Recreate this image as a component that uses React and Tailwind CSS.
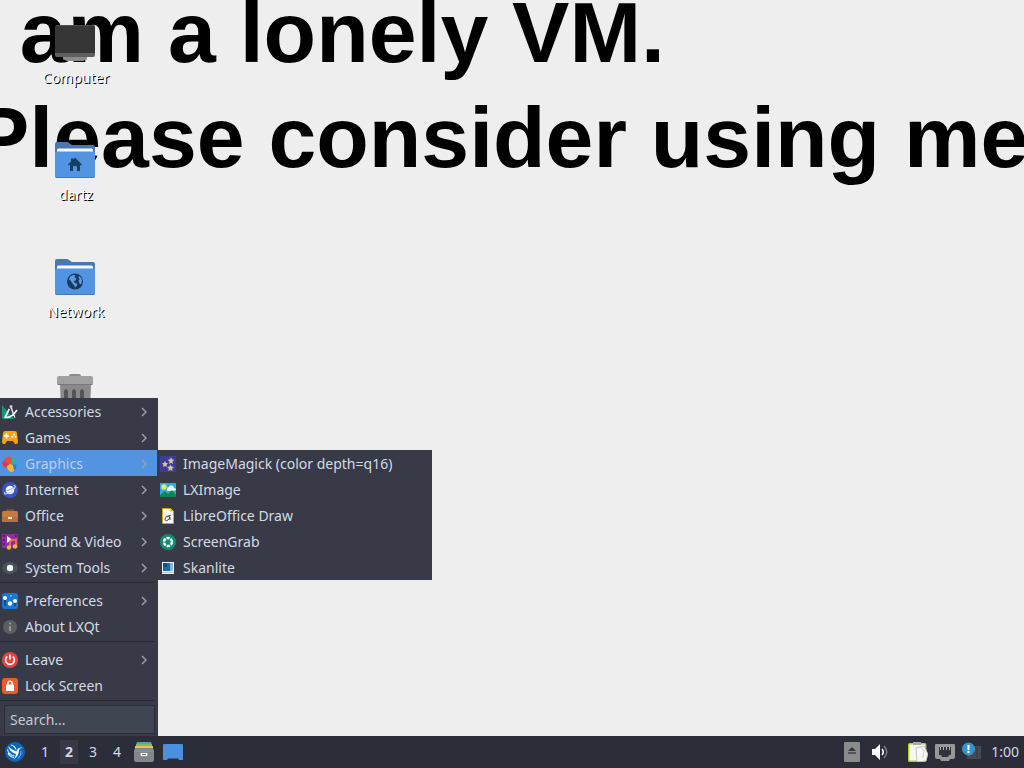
import React from 'react';
import clsx from 'clsx';

const ComputerIcon = () => (
  <svg viewBox="0 0 40 40" className="h-10 w-10">
    <path d="M8 34h24v1.500q0 1.500-2 1.500l-2 1H12l-2-1q-2 0-2-1.500z" fill="#8a8a8a" />
    <path d="M0 30h40v2q0 2-2 2H2q-2 0-2-2z" fill="#5f5f5f" />
    <path d="M2 2h36q2 0 2 2v26H0V4q0-2 2-2z" fill="#363636" />
    <path d="M1 2.500h38" stroke="#4c4c4c" />
  </svg>
);

const FolderIcon = ({ children }) => (
  <svg viewBox="0 0 40 40" className="h-10 w-10">
    <path d="M0 4q0-2 2-2h10q1 0 2 1l3 2h21q2 0 2 2v8H0z" fill="#4877b1" />
    <path d="M2 10q0-1.500 1.500-1.500h33Q38 8.500 38 10v4H2z" fill="#f5f7fb" />
    <path d="M0 13q0-1.500 1.500-1.500h37Q40 11.500 40 13v23q0 2-2 2H2q-2 0-2-2z" fill="#5294e2" />
    <path d="M0 36q0 2 2 2h36q2 0 2-2v-.6q0 1.600-2 1.600H2q-2 0-2-1.600z" fill="#4079bd" />
    {children}
  </svg>
);

const HomeFolderIcon = () => (
  <FolderIcon>
    <path d="M20 17.500l7 7-1 1-1-.8V31h-3v-4q0-1-2-1t-2 1v4h-3v-6.300l-1 .8-1-1 3-3v-3h2v1z" fill="#17405f" />
  </FolderIcon>
);

const NetworkFolderIcon = () => (
  <FolderIcon>
    <circle cx="20" cy="24.500" r="8" fill="#173a62" />
    <path d="M15 19.500l3-1.500 2.500.5-1 2 2 1-1 2-2 1 1.500 1.500 2 .5v2l-2 2-1-2.500-2-2-1.500-2.500-1.500-1zM24.500 19l2 2.500.5 3-1 3-1.500-1-1-2.500 1-1.500-1-2z" fill="#5d9ae2" />
  </FolderIcon>
);

const TrashIcon = () => (
  <svg viewBox="0 0 40 40" className="h-10 w-10">
    <path d="M14 2q0-2 2-2h8q2 0 2 2v2H14z" fill="#8b8b8b" />
    <path d="M5 10h31l-1 28q0 2-2 2H8q-2 0-2-2z" fill="#8a8a8a" />
    <path d="M9 17q2-4 4 0v21H9zM17 17q2-4 4 0v21h-4zM25 17q2-4 4 0v21h-4z" fill="#555" />
    <path d="M2 4q0-2 2-2h32q2 0 2 2v6q0 1-1 1H3q-1 0-1-1z" fill="#a0a0a0" />
    <path d="M3 10.500h34" stroke="#777" />
  </svg>
);

const Icon = ({ children }) => (
  <svg viewBox="0 0 16 16" className="h-4 w-4 shrink-0">{children}</svg>
);

const AccessoriesIcon = () => (
  <Icon>
    <path d="M0 1l12 14H1q-1 0-1-1z" fill="#16956f" />
    <path d="M3 13.500l4-8" stroke="#e9eef3" strokeWidth="1.700" strokeLinecap="round" />
    <path d="M9 3l3 9" stroke="#dfe5ea" strokeWidth="1.500" />
    <path d="M3 13q6 2 12-7" stroke="#f4f6f8" strokeWidth="1.600" fill="none" />
    <circle cx="9" cy="2.500" r="1.500" fill="#c5ccd4" />
    <path d="M12 11l1 3" stroke="#eceff1" />
  </Icon>
);

const GamesIcon = () => (
  <Icon>
    <path d="M3 1h10q1.500 0 2 2l1 9q0 2-2 2h-1l-2-3H5l-2 3H2q-2 0-2-2l1-9q.5-2 2-2z" fill="#f9a30f" />
    <path d="M4.500 3.500v5M2 6h5" stroke="#fff" strokeWidth="1.700" />
    <circle cx="12" cy="4.500" r="1" fill="#fff" />
    <circle cx="10.300" cy="6.800" r="1" fill="#fff" />
    <circle cx="13.500" cy="6.800" r="1" fill="#fff" />
  </Icon>
);

const GraphicsIcon = () => (
  <Icon>
    <path d="M9 8V2q3-2 4 1t-1 5z" fill="#3fb27f" />
    <path d="M9 8l4-4q4 1 3 4.500T11 11z" fill="#28a9d6" />
    <path d="M9 8l5 1q1 3-1 4.500T9 13z" fill="#3c6fd0" />
    <path d="M8 9L2 4Q-1 7 1 10t5 1z" fill="#d93c55" />
    <path d="M9 9L3 5q0-4 3.500-4.500T10 4z" fill="#ee4f34" />
    <path d="M8 8l-3 2q0 4 3 5.500t4-1.500l-1-5z" fill="#f7b92b" />
  </Icon>
);

const InternetIcon = () => (
  <Icon>
    <circle cx="8" cy="8" r="8" fill="#3d53c4" />
    <circle cx="8" cy="8" r="4.300" fill="#f4f7ff" />
    <path d="M3 10q-1.500 2.500 1 2 6-1.500 9-6.500 1-2.500-1.500-1.500" stroke="#c3d0fa" strokeWidth="1.200" fill="none" />
    <path d="M4.500 8.500q4-.5 7-3" stroke="#8fa3ea" strokeWidth="1" fill="none" />
  </Icon>
);

const OfficeIcon = () => (
  <Icon>
    <path d="M5 4V2h6v2" stroke="#8c5330" strokeWidth="1.500" fill="none" />
    <rect x="0" y="3" width="16" height="11" rx="1.500" fill="#c47a42" />
    <path d="M0 9h16v4q0 1-1.500 1h-13Q0 14 0 13z" fill="#b76f3c" />
    <rect x="6" y="9" width="4" height="2" fill="#fbe6bf" />
  </Icon>
);

const SoundVideoIcon = () => (
  <Icon>
    <rect width="16" height="14" rx="1" fill="#8b2fa3" />
    <path d="M1 1h2v2H1zM1 5h2v2H1zM1 9h2v2H1zM13 1h2v2h-2z" fill="#562071" />
    <path d="M5 2l5 3.500L5 9z" fill="#fff" />
    <path d="M8 6.500l6-1v7M8 6.500v7" stroke="#f36b50" strokeWidth="1.800" fill="none" />
    <circle cx="7" cy="13.500" r="2.200" fill="#f8ad37" />
    <circle cx="13" cy="12.500" r="2.200" fill="#f8ad37" />
  </Icon>
);

const SystemToolsIcon = () => (
  <Icon>
    <path d="M5 2h6l1 1.500 2.500.5 1 4-1 4-2.500.5-1 1.500H5l-1-1.500-2.500-.5-1-4 1-4L4 3.500z" fill="#46535d" />
    <circle cx="8" cy="8" r="3.200" fill="#f5f8fa" />
  </Icon>
);

const PreferencesIcon = () => (
  <Icon>
    <rect width="16" height="16" rx="3" fill="#1679d3" />
    <path d="M3 6v7M8 9v4M13 8v5" stroke="#0a4c90" strokeWidth="2" />
    <circle cx="3" cy="5" r="2" fill="#fff" />
    <circle cx="8" cy="10.500" r="2.200" fill="#fff" />
    <circle cx="13" cy="8" r="2" fill="#fff" />
    <circle cx="9" cy="3" r="1" fill="#73b9f1" />
  </Icon>
);

const AboutIcon = () => (
  <Icon>
    <circle cx="8" cy="8" r="7" fill="#5d5e62" />
    <circle cx="8" cy="4.500" r="1.100" fill="#989aa1" />
    <path d="M8 7v5" stroke="#989aa1" strokeWidth="1.800" />
  </Icon>
);

const LeaveIcon = () => (
  <Icon>
    <circle cx="8" cy="8" r="8" fill="#e5413f" />
    <path d="M5.300 4.500a4.400 4.400 0 1 0 5.400 0" stroke="#fff" strokeWidth="1.600" fill="none" />
    <path d="M8 2.500v5" stroke="#fff" strokeWidth="1.700" />
  </Icon>
);

const LockIcon = () => (
  <Icon>
    <rect width="16" height="16" rx="3" fill="#f0592a" />
    <path d="M5.800 8V5.500a2.200 2.200 0 0 1 4.400 0V8" stroke="#fff" strokeWidth="1.500" fill="none" />
    <rect x="4" y="6.500" width="8" height="6.500" rx=".5" fill="#fff" />
  </Icon>
);

const ImageMagickIcon = () => (
  <Icon>
    <rect width="16" height="16" fill="#3d3d98" />
    <path d="M11 1l1 2.500 2.500.3-2 1.700.6 2.500-2.100-1.300L8.900 8l.6-2.500-2-1.700 2.500-.3zM5 5l1 2 2 .3-1.500 1.500.4 2.200L5 9.900 3.100 11l.4-2.200L2 7.300 4 7zM10.500 8.500l1 2 2.500.4-1.800 1.600.4 2.500-2.100-1.200L8.400 15l.4-2.500L7 10.900l2.500-.4z" fill="#d8c6a2" />
  </Icon>
);

const LXImageIcon = () => (
  <Icon>
    <rect y="1" width="16" height="14" fill="#25afe8" />
    <circle cx="4" cy="5" r="2.700" fill="#f3e46e" />
    <path d="M7 7q0-2 2-2 1-2.500 3-1.500 2 .5 2 2.500 2 0 2 2l-3 1H8Q6 9 7 7z" fill="#f3fbff" />
    <path d="M0 13l5-4 3 3 4-4 4 5v2H0z" fill="#148447" />
  </Icon>
);

const DrawIcon = () => (
  <Icon>
    <path d="M2.500.5h8l3 3v12h-11z" fill="#fffdf4" stroke="#d7aa17" />
    <path d="M10.500 0v3.500H14z" fill="#dbaf1d" />
    <path d="M5 11q1-4 4-3 2 2-1 4t-3-1M7 9l4-2M10 9v3" stroke="#4c4a4d" fill="none" />
  </Icon>
);

const ScreenGrabIcon = () => (
  <Icon>
    <circle cx="8" cy="8" r="8" fill="#128c72" />
    <circle cx="8" cy="8" r="4" stroke="#fff" strokeWidth="2.400" strokeDasharray="3.200 1" fill="none" />
  </Icon>
);

const SkanliteIcon = () => (
  <Icon>
    <rect x="2" y="2" width="12" height="12" fill="#e8f1f8" />
    <rect x="3" y="3" width="7" height="8" fill="#1b6cad" />
    <path d="M3 3h4v4H3z" fill="#174b83" />
    <path d="M10 3h3v8h-3z" fill="#79b9e2" />
    <path d="M2 12.500h12" stroke="#b9c4ce" />
  </Icon>
);

const Chevron = () => (
  <svg viewBox="0 0 6 10" className="ml-auto h-2.5 w-1.5 shrink-0">
    <path d="M1 1l4 4-4 4" fill="none" stroke="#999eab" strokeWidth="1.500" />
  </svg>
);

const StartIcon = () => (
  <svg viewBox="0 0 20 20" className="h-5 w-5">
    <circle cx="10" cy="10" r="10" fill="#0a66bd" />
    <path d="M3 4q3.500 4 8.500 5.500Q12 5 18 5.500q-4 .5-4.200 4Q13.500 15 8 17.500q3-3 3-5.500Q5 10.500 3 4z" fill="#e9f4fd" />
    <path d="M2.500 7.500q1 5 7 6.500M3 11q2 4 6 4.500M11 7.500Q10 4 6 3" stroke="#e9f4fd" strokeWidth="1.100" fill="none" />
    <path d="M16 9q1 4-3 7.500" stroke="#8fc1ec" strokeWidth=".9" fill="none" />
  </svg>
);

const FileManagerIcon = () => (
  <svg viewBox="0 0 20 20" className="h-5 w-5">
    <path d="M3 0h14l1 3H2z" fill="#52a0bd" />
    <path d="M2 2h16v3H2z" fill="#83b966" />
    <path d="M1 4h18v3H1z" fill="#e7c34e" />
    <path d="M1 6h18l1 3v9q0 2-2 2H2q-2 0-2-2V9z" fill="#84878a" />
    <path d="M0 9h20" stroke="#96999b" />
    <rect x="6.500" y="11" width="7" height="3" rx="1" fill="#fafafa" />
    <path d="M8 12.500h4" stroke="#686b6e" />
  </svg>
);

const ShowDesktopIcon = () => (
  <svg viewBox="0 0 20 20" className="h-5 w-5">
    <path d="M0 3q0-1 1-1h18q1 0 1 1v15h-4l-1-1.500H5L4 18H0z" fill="#4b8fdf" />
  </svg>
);

const EjectIcon = () => (
  <svg viewBox="0 0 16 20" className="h-5 w-4">
    <rect width="16" height="20" rx="1" fill="#8b8b8d" />
    <path d="M8 5l4 4H4z" fill="#34363d" />
    <path d="M4 11h8" stroke="#34363d" strokeWidth="1.300" />
  </svg>
);

const VolumeIcon = () => (
  <svg viewBox="0 0 16 16" className="h-4 w-4">
    <path d="M0 5h3l5-5v16l-5-5H0z" fill="#fff" />
    <path d="M10 5q2.500 3 0 6" stroke="#fff" strokeWidth="1.600" fill="none" />
    <path d="M12 2q5.500 6 0 12" stroke="#777b87" strokeWidth="1.500" fill="none" />
  </svg>
);

const ClipboardIcon = () => (
  <svg viewBox="0 0 20 20" className="h-5 w-5">
    <rect x=".7" y="1.700" width="17" height="17.600" rx="1" fill="#f8f8f3" stroke="#b6ca31" strokeWidth="1.400" />
    <path d="M5 0h8v3H5z" fill="#a9aaa5" />
    <path d="M8 6l8-2 4 8-2 7-9 1z" fill="#f7f7f7" stroke="#b7b7b5" strokeWidth=".8" />
    <path d="M13 5l3 4-1 7" stroke="#d0d0cf" fill="none" />
  </svg>
);

const EthernetIcon = () => (
  <svg viewBox="0 0 20 20" className="h-5 w-5">
    <path d="M1 2h18q1 0 1 1v12q0 2-2 2h-3l-1 2H6l-1-2H2q-2 0-2-2V3q0-1 1-1z" fill="#979797" />
    <path d="M4 5h12v8h-2l-1 2H7l-1-2H4z" fill="#30333b" />
    <path d="M5.500 5v3M8.500 5v3M11.500 5v3M14.500 5v3" stroke="#b5b5b5" />
  </svg>
);

const UpdateIcon = () => (
  <svg viewBox="0 0 20 20" className="h-5 w-5">
    <rect x="5" y="4" width="14" height="13" fill="#474a55" />
    <path d="M15 5v11" stroke="#343640" />
    <circle cx="6.500" cy="7" r="6.500" fill="#3793cf" />
    <path d="M6.500 3v5" stroke="#fff" strokeWidth="2" />
    <circle cx="6.500" cy="10" r="1.200" fill="#fff" />
  </svg>
);

const desktopItems = [
  { name: 'Computer', icon: ComputerIcon },
  { name: 'dartz', icon: HomeFolderIcon },
  { name: 'Network', icon: NetworkFolderIcon },
  { name: 'Trash', icon: TrashIcon, iconOnly: true },
];

const menuGroups = [
  [
    { label: 'Accessories', icon: AccessoriesIcon, submenu: true },
    { label: 'Games', icon: GamesIcon, submenu: true },
    { label: 'Graphics', icon: GraphicsIcon, submenu: true, active: true },
    { label: 'Internet', icon: InternetIcon, submenu: true },
    { label: 'Office', icon: OfficeIcon, submenu: true },
    { label: 'Sound & Video', icon: SoundVideoIcon, submenu: true },
    { label: 'System Tools', icon: SystemToolsIcon, submenu: true },
  ],
  [
    { label: 'Preferences', icon: PreferencesIcon, submenu: true },
    { label: 'About LXQt', icon: AboutIcon },
  ],
  [
    { label: 'Leave', icon: LeaveIcon, submenu: true },
    { label: 'Lock Screen', icon: LockIcon },
  ],
];

const graphicsItems = [
  { label: 'ImageMagick (color depth=q16)', icon: ImageMagickIcon },
  { label: 'LXImage', icon: LXImageIcon },
  { label: 'LibreOffice Draw', icon: DrawIcon },
  { label: 'ScreenGrab', icon: ScreenGrabIcon },
  { label: 'Skanlite', icon: SkanliteIcon },
];

const MenuItem = ({ label, icon: ItemIcon, submenu, active }) => (
  <button
    type="button"
    className={clsx(
      'flex h-[26px] w-full items-center gap-[7px] pt-px pl-0.5 pr-2.5 text-left whitespace-nowrap',
      active ? 'bg-[#5294e2] text-[#b9cdec]' : 'text-[#d3dae3]',
    )}
  >
    <ItemIcon />
    <span>{label}</span>
    {submenu && <Chevron />}
  </button>
);

const MainMenu = () => (
  <div className="absolute bottom-0 left-0 flex items-start text-sm">
    <nav aria-label="Applications" className="w-[158px] bg-[#383a47]">
      {menuGroups.map((group) => (
        <div key={group[0].label}>
          <div className="pr-px">
            {group.map((item) => <MenuItem key={item.label} {...item} />)}
          </div>
          <hr className="mt-0.5 mr-1 mb-1 border-t border-[#262833]" />
        </div>
      ))}
      <div className="pb-0.5 pl-1 pr-[3px]">
        <input
          type="text"
          aria-label="Search"
          placeholder="Search..."
          className="block h-[29px] w-full border border-[#2c2f3b] bg-[#404552] px-[5px] text-[#d3dae3] outline-none placeholder:text-[#c3cad5]"
        />
      </div>
    </nav>
    <nav aria-label="Graphics" className="mt-[52px] w-[274px] bg-[#383a47]">
      {graphicsItems.map((item) => <MenuItem key={item.label} {...item} />)}
    </nav>
  </div>
);

const Taskbar = () => (
  <footer className="flex h-8 shrink-0 items-center bg-[#2b2e39] pl-[5px] pr-[5px] text-sm text-[#d3dae3]">
    <button type="button" aria-label="Menu"><StartIcon /></button>
    <div className="ml-[11px] flex gap-1.5">
      {[1, 2, 3, 4].map((n) => (
        <button
          key={n}
          type="button"
          className={clsx('h-6 w-[18px] text-center', n === 2 && 'bg-[#373a46] font-bold')}
        >
          {n}
        </button>
      ))}
    </div>
    <div className="ml-2 flex gap-[9px]">
      <button type="button" aria-label="Files"><FileManagerIcon /></button>
      <button type="button" aria-label="Show desktop"><ShowDesktopIcon /></button>
    </div>
    <div className="ml-auto flex items-center">
      <div className="mr-5 flex items-center gap-3">
        <button type="button" aria-label="Removable media"><EjectIcon /></button>
        <button type="button" aria-label="Volume"><VolumeIcon /></button>
      </div>
      <div className="mr-[9px] flex items-center gap-[7px]">
        <button type="button" aria-label="Clipboard"><ClipboardIcon /></button>
        <button type="button" aria-label="Network"><EthernetIcon /></button>
        <button type="button" aria-label="Updates"><UpdateIcon /></button>
      </div>
      <time>1:00</time>
    </div>
  </footer>
);

const App = () => (
  <div className="flex h-screen flex-col overflow-hidden bg-[#eeeeee] font-['Noto_Sans',sans-serif]">
    <main className="relative flex-1 overflow-hidden">
      <div className="absolute -top-5 -left-7 font-['Liberation_Sans',sans-serif] text-[86px] leading-[105px] font-bold whitespace-nowrap text-black">
        <p>I am a lonely VM.</p>
        <p>Please consider using me</p>
      </div>
      <div className="relative flex w-[150px] flex-col gap-[51px] pt-[23px]">
        {desktopItems.map(({ name, icon: ItemIcon, iconOnly }) => (
          <button key={name} type="button" aria-label={name} className="flex h-[66px] flex-col items-center gap-[5px]">
            <ItemIcon />
            {!iconOnly && <span className="pl-0.5 text-sm text-white [text-shadow:1px_1px_0_#000]">{name}</span>}
          </button>
        ))}
      </div>
      <MainMenu />
    </main>
    <Taskbar />
  </div>
);

export default App;
